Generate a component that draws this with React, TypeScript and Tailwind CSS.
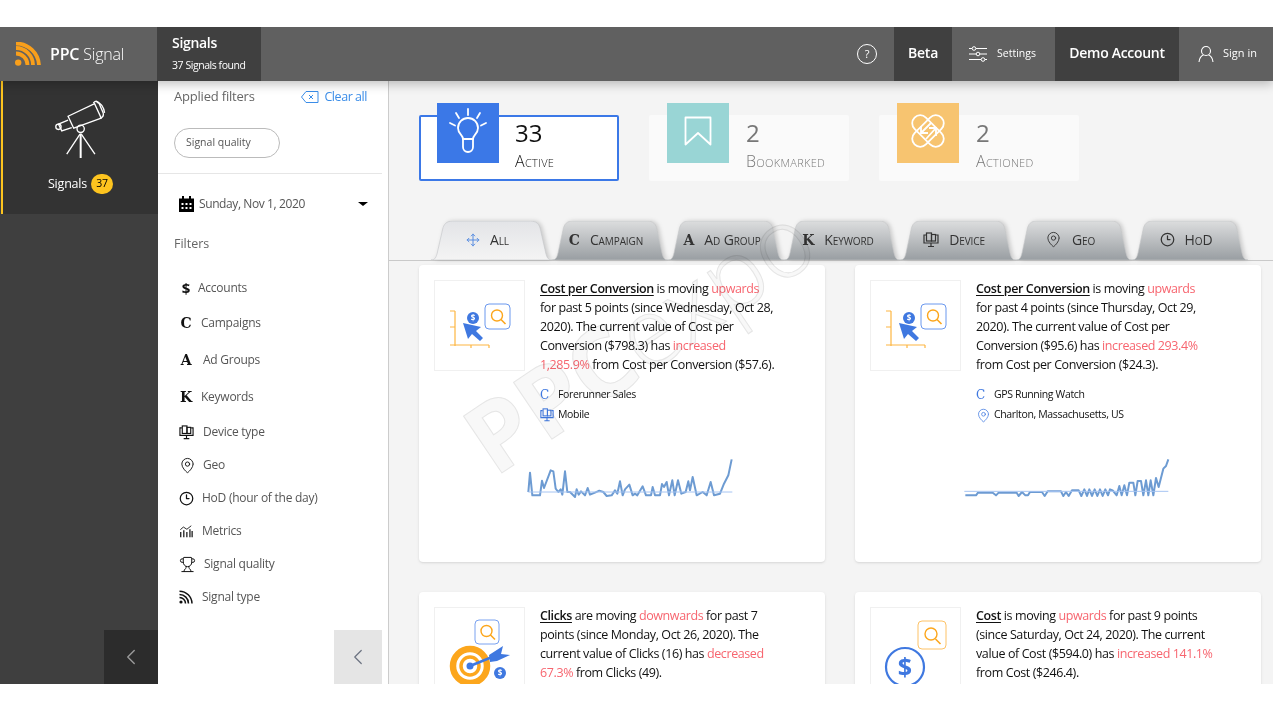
import React from 'react'
import { ChevronLeft, Move, MapPin, Clock3, Trophy } from 'lucide-react'

const font = 'font-["Open_Sans",sans-serif]'

function Serif({ c, className = '' }: { c: string; className?: string }) {
    return <span className={`font-["DejaVu_Serif",serif] font-bold leading-none ${className}`}>{c}</span>
}

function DeviceIcon({ className = '' }: { className?: string }) {
    return (
        <svg viewBox="0 0 16 16" className={className} fill="none" stroke="currentColor" strokeWidth="1.2">
            <path d="M3 3H1v8h14V3h-2" />
            <rect x="3.5" y="1" width="5" height="8" />
            <rect x="8.5" y="2.5" width="4" height="6.5" />
            <path d="M8 11v3M5 14.5h6" />
        </svg>
    )
}

function MetricsIcon({ className = '' }: { className?: string }) {
    return (
        <svg viewBox="0 0 16 16" className={className} fill="none" stroke="currentColor" strokeWidth="1.4">
            <path d="M2 15V9M5.5 15V7M9 15V9M12.5 15V6M15 15V8" />
            <path d="M1.5 6.5 5 3.5 9 6l5-4" strokeWidth="1" />
        </svg>
    )
}

function RssIcon() {
    return (
        <svg viewBox="0 0 14 14" className="w-[14px] h-[14px]" fill="none" stroke="#111" strokeWidth="1.5">
            <circle cx="2" cy="12" r="1.6" fill="#111" stroke="none" />
            <path d="M.5 7.5a6 6 0 0 1 6 6M.5 4.5a9 9 0 0 1 9 9M.5 1.2a12.5 12.5 0 0 1 12.5 12.3" />
        </svg>
    )
}

function CalendarIcon() {
    return (
        <svg viewBox="0 0 15 16" className="w-[15px] h-[16px] mr-[5px]">
            <path d="M0 2.5h3V0h2v2.5h5V0h2v2.5h3V16H0Z" fill="#000" />
            <path d="M2.5 7h2v2h-2zM6.5 7h2v2h-2zM10.5 7h2v2h-2zM2.5 11h2v2h-2zM6.5 11h2v2h-2zM10.5 11h2v2h-2z" fill="#fff" />
        </svg>
    )
}

function Logo() {
    return (
        <svg viewBox="0 0 26 24" className="w-[26px] h-[24px]" fill="none" stroke="#f99f1b" strokeWidth="3.8">
            <circle cx="3.2" cy="20.6" r="3.2" fill="#f99f1b" stroke="none" />
            <path d="M1 11.5a11.5 11.5 0 0 1 11.5 11.5" />
            <path d="M1 6a17 17 0 0 1 17 17" />
            <path d="M1 1.5a23 23 0 0 1 23 21.5" />
        </svg>
    )
}

function Telescope() {
    return (
        <svg viewBox="160 235 165 190" className="w-[55px] h-[63px]" fill="none" stroke="#fff" strokeWidth="4">
            <path d="M205 290 285 252 305 296 222 326Z" />
            <path d="M281 250c8-8 14-6 18 2l12 28c2 8-2 14-10 16" />
            <path d="M291 248c12 0 22 14 24 32" />
            <path d="M205 302 176 314l10 20 30-10" />
            <circle cx="176" cy="322" r="8" />
            <circle cx="243" cy="328" r="11" />
            <path d="M243 342v74" strokeWidth="6" />
            <path d="M241 344 201 404M245 344l41 60" />
        </svg>
    )
}

function BulbIcon() {
    return (
        <svg viewBox="0 0 62 60" className="w-[62px] h-[60px]" fill="none" stroke="#fff" strokeWidth="1.8" strokeLinecap="round">
            <path d="M26 36c0-4-5-5-5-11a10 10 0 0 1 20 0c0 6-5 7-5 11" />
            <path d="M26 36h10v8a5 5 0 0 1-10 0Z" />
            <path d="M31 6v6M19 10l3 5M43 10l-3 5M13 20l5 2.5M49 20l-5 2.5" />
        </svg>
    )
}

function BookmarkIcon() {
    return (
        <svg viewBox="0 0 62 60" className="w-[62px] h-[60px]" fill="none" stroke="#fff" strokeWidth="1.8" strokeLinejoin="round">
            <path d="M18.5 14.500h25v27L31 30 18.5 41.5Z" />
        </svg>
    )
}

function ActionedIcon() {
    return (
        <svg viewBox="0 0 62 60" className="w-[62px] h-[60px]" fill="none" stroke="#fff" strokeWidth="1.8">
            <rect x="12" y="20" width="38" height="16" rx="8" transform="rotate(45 31 28)" />
            <rect x="12" y="20" width="38" height="16" rx="8" transform="rotate(-45 31 28)" />
            <path d="M24 23v7h7M24.5 29.5 34 20" />
            <path d="M39 33v-8h-7M38.5 25.5 29 36" />
        </svg>
    )
}

function Magnifier({ x, y, w, h, stroke }: { x: number; y: number; w: number; h: number; stroke: string }) {
    const cx = x + w / 2
    const cy = y + h / 2
    return (
        <g>
            <rect x={x} y={y} width={w} height={h} rx="4" fill="#fff" stroke={stroke} strokeWidth="1" />
            <circle cx={cx - 0.5} cy={cy - 1} r="5.5" fill="none" stroke="#fca61c" strokeWidth="1.4" />
            <path d={`M${cx + 3.5} ${cy + 3} l4.5 4.5`} stroke="#fca61c" strokeWidth="1.6" />
        </g>
    )
}

function Badge({ x, y }: { x: number; y: number }) {
    return (
        <g>
            <circle cx={x} cy={y} r="6" fill="#3f78e0" />
            <text x={x} y={y + 3} textAnchor="middle" fontSize="8" fontWeight="700" fill="#fff" fontFamily="Open Sans">$</text>
        </g>
    )
}

function ChartThumb() {
    return (
        <svg viewBox="0 0 89 89" className="w-full h-full" fill="none">
            <path d="M20 30v35M15 30h5M15 46h5M15 64h39M36 64v3M54 64v3" stroke="#fdb642" strokeWidth="1.2" />
            <path d="M28 42 46 46 41 50 48 57 45 60 37 53 33 58Z" fill="#3f78e0" />
            <Badge x={38} y={37} />
            <Magnifier x={50} y={23} w={25} h={25} stroke="#6b98ee" />
        </svg>
    )
}

function TargetThumb() {
    return (
        <svg viewBox="0 0 89 89" className="w-full h-full" fill="none">
            <Magnifier x={40} y={12} w={24} h={24} stroke="#7aa2f0" />
            <circle cx="35" cy="58" r="17" stroke="#fca61c" strokeWidth="6.5" />
            <circle cx="35" cy="58" r="9" stroke="#fca61c" strokeWidth="3.5" />
            <circle cx="35" cy="58" r="3.5" fill="#3f78e0" />
            <path d="M35 58 62 47" stroke="#3f78e0" strokeWidth="2.5" />
            <path d="M54 47l14-9-2 8 9 1-13 6-7 1Z" fill="#3f78e0" />
            <Badge x={65} y={65} />
        </svg>
    )
}

function DollarThumb() {
    return (
        <svg viewBox="0 0 89 89" className="w-full h-full" fill="none">
            <rect x="47" y="13" width="28" height="28" rx="4" fill="#fff" stroke="#fdc266" strokeWidth="1" />
            <circle cx="60" cy="26" r="6" stroke="#fca61c" strokeWidth="1.4" />
            <path d="M64.5 31l5 5" stroke="#fca61c" strokeWidth="1.6" />
            <circle cx="34" cy="59" r="19" stroke="#3f78e0" strokeWidth="2.2" />
            <text x="34" y="68" textAnchor="middle" fontSize="25" fontWeight="700" fill="#3f78e0" fontFamily="Open Sans">$</text>
        </svg>
    )
}

const spark1 = '25,150 30,92 37,160 60,160 66,116 72,138 92,85 100,88 107,140 115,150 122,142 127,158 135,88 142,150 150,150 165,165 170,142 176,158 183,148 195,160 203,138 210,158 225,152 238,146 250,150 260,162 275,160 285,145 292,155 300,118 308,160 315,142 328,128 338,160 345,155 352,160 368,133 378,160 393,160 398,135 405,160 420,160 426,126 432,135 440,120 447,160 457,115 464,160 474,115 484,155 497,150 505,118 510,145 518,105 530,160 548,150 560,160 572,120 582,160 600,155 612,125 625,100 635,52'
const spark2 = '28,160 60,160 66,152 110,152 120,160 128,152 182,152 188,162 198,150 208,160 216,160 222,150 258,150 266,162 275,148 315,148 322,162 330,150 338,162 348,145 368,145 376,162 385,142 393,162 400,142 408,162 416,142 424,162 432,142 440,162 448,142 456,160 462,142 470,145 482,160 490,132 497,160 505,130 513,160 520,122 532,122 538,160 545,117 555,117 562,160 570,115 577,160 584,115 592,160 600,108 608,135 622,80 630,72 637,52'

function Spark({ points, base }: { points: string; base: number }) {
    return (
        <svg viewBox="0 0 660 210" className="w-[220px] h-[70px] ml-[86px] mt-[17px]" fill="none">
            <polyline points={points} stroke="#6d9bd2" strokeWidth="6" strokeLinejoin="round" />
            <path d={`M25 ${base}H637`} stroke="#a6c4f2" strokeWidth="3" />
        </svg>
    )
}

const R = ({ children }: { children: React.ReactNode }) => <span className="text-[#f7656f]">{children}</span>
const T = ({ children }: { children: React.ReactNode }) => <span className="font-semibold underline underline-offset-2">{children}</span>

function Card({ thumb, lines, meta, spark }: { thumb: React.ReactNode; lines: React.ReactNode; meta?: React.ReactNode; spark?: React.ReactNode }) {
    return (
        <div className="bg-white h-[297px] p-[15px] rounded-sm shadow-sm">
            <div className="flex gap-[15px]">
                <div className="w-[91px] h-[91px] border border-[#f0f0f0] shrink-0">{thumb}</div>
                <div className="text-[12.5px] leading-[19px] text-[#111] whitespace-nowrap -mt-[1px] tracking-[-0.4px]">{lines}</div>
            </div>
            {meta}
            {spark}
        </div>
    )
}

function MetaRow({ icon, text }: { icon: React.ReactNode; text: string }) {
    return (
        <div className="flex items-center h-[20px] pl-[106px] text-[10.5px] text-[#111] tracking-[-0.35px]">
            <span className="w-[18px] flex text-[#3f78e0]">{icon}</span>
            {text}
        </div>
    )
}

const filters = [
    { icon: <span className="font-bold text-[15px] leading-none">$</span>, label: 'Accounts', h: 'h-[34px]', gap: 'gap-[5px]' },
    { icon: <Serif c="C" className="text-[14px]" />, label: 'Campaigns', h: 'h-[36px]', gap: 'gap-[8px]' },
    { icon: <Serif c="A" className="text-[14px]" />, label: 'Ad Groups', h: 'h-[38px]', gap: 'gap-[10px]' },
    { icon: <Serif c="K" className="text-[14px]" />, label: 'Keywords', h: 'h-[36px]', gap: 'gap-[8px]' },
    { icon: <DeviceIcon className="w-[15px] h-[15px]" />, label: 'Device type', h: 'h-[34px]', gap: 'gap-[9px]' },
    { icon: <MapPin className="w-[17px] h-[17px]" strokeWidth={1.3} />, label: 'Geo', h: 'h-[32px]', gap: 'gap-[7px]' },
    { icon: <Clock3 className="w-[15px] h-[15px]" strokeWidth={2} />, label: 'HoD (hour of the day)', h: 'h-[34px]', gap: 'gap-[8px]' },
    { icon: <MetricsIcon className="w-[14px] h-[14px]" />, label: 'Metrics', h: 'h-[32px]', gap: 'gap-[9px]' },
    { icon: <Trophy className="w-[17px] h-[17px]" strokeWidth={1.4} />, label: 'Signal quality', h: 'h-[34px]', gap: 'gap-[8px]' },
    { icon: <RssIcon />, label: 'Signal type', h: 'h-[32px]', gap: 'gap-[9px]' },
]

const tabs = [
    { label: 'Campaign', icon: <Serif c="C" className="text-[14px]" /> },
    { label: 'Ad Group', icon: <Serif c="A" className="text-[14px]" /> },
    { label: 'Keyword', icon: <Serif c="K" className="text-[14px]" /> },
    { label: 'Device', icon: <DeviceIcon className="w-[16px] h-[16px]" /> },
    { label: 'Geo', icon: <MapPin className="w-[17px] h-[17px]" strokeWidth={1.3} /> },
    { label: 'HoD', icon: <Clock3 className="w-[15px] h-[15px]" strokeWidth={2} /> },
]

function Tab({ id, label, icon, active }: { id: string; label: string; icon: React.ReactNode; active?: boolean }) {
    return (
        <div className={`relative h-[39px] flex items-center justify-center gap-[10px] pb-[2px] pr-[8px] text-[14px] text-[#333] [font-variant-caps:small-caps] tracking-[-0.1px] ${active ? 'w-[121px] z-10' : 'w-[116px]'}`}>
            <svg viewBox="0 0 116 39" preserveAspectRatio="none" className="absolute inset-0 w-full h-full drop-shadow-[2px_0_2px_rgba(0,0,0,0.18)]">
                <defs>
                    <linearGradient id={id} x1="0" y1="0" x2="0" y2="1">
                        <stop offset="0" stopColor={active ? '#e3e4e7' : '#dcddde'} />
                        <stop offset="1" stopColor={active ? '#f4f4f4' : '#999ea2'} />
                    </linearGradient>
                </defs>
                <path d="M0 39C4 39 5 36 6 32L11 9C12 3 15 0 21 0H95C101 0 104 3 105 9L110 32C111 36 112 39 116 39Z" fill={`url(#${id})`} stroke="#c4c6c8" strokeWidth="0.6" />
            </svg>
            <span className="relative flex">{icon}</span>
            <span className="relative">{label}</span>
        </div>
    )
}

function Stat({ bg, icon, num, label, active }: { bg: string; icon: React.ReactNode; num: string; label: string; active?: boolean }) {
    return (
        <div className={`w-[200px] h-[66px] rounded-[2px] flex ${active ? 'bg-white border-2 border-[#3b78e7] pl-[16px] gap-[16px] text-[#111]' : 'bg-[#fafafa] pl-[18px] gap-[17px] text-[#777]'}`}>
            <div className={`w-[62px] h-[60px] shrink-0 ${active ? '-mt-[14px]' : '-mt-[12px]'} ${bg}`}>{icon}</div>
            <div className={active ? '-mt-[1px]' : 'pt-[1px]'}>
                <div className="text-[24px] leading-[34px]">{num}</div>
                <div className="text-[16px] leading-[22px] font-light [font-variant-caps:small-caps] tracking-[0.3px]">{label}</div>
            </div>
        </div>
    )
}

export default function App() {
    return (
        <div className={`h-[711px] bg-white pt-[27px] pb-[27px] ${font}`}>
            <div className="h-full flex flex-col overflow-hidden relative">
                <header className="h-[54px] shrink-0 bg-[#606060] flex items-stretch text-white relative z-20 shadow-[0_3px_10px_rgba(0,0,0,0.25)]">
                    <div className="w-[157px] flex items-center pl-[15px] gap-[9px]">
                        <Logo />
                        <div className="text-[16px] tracking-[-0.2px]"><span className="font-semibold">PPC</span> <span className="font-light">Signal</span></div>
                    </div>
                    <div className="w-[104px] bg-[#404040] pl-[15px] pt-[6px]">
                        <div className="text-[14px] font-semibold leading-[20px] tracking-[-0.3px]">Signals</div>
                        <div className="text-[10.5px] leading-[14px] mt-[5px] tracking-[-0.45px]">37 Signals found</div>
                    </div>
                    <div className="flex-1" />
                    <div className="w-[54px] flex items-center justify-center">
                        <div className="w-[20px] h-[20px] rounded-full border border-white flex items-center justify-center text-[11px]">?</div>
                    </div>
                    <div className="w-[58px] bg-[#404040] flex items-center justify-center pb-[3px] text-[14px] font-semibold tracking-[-0.2px]">Beta</div>
                    <div className="w-[103px] flex items-center pl-[17px] gap-[10px] text-[10.5px]">
                        <svg viewBox="0 0 18 16" className="w-[18px] h-[16px]" fill="none" stroke="#fff" strokeWidth="1">
                            <path d="M0 2.5h3M7 2.5h11M0 8h7M11 8h7M0 13.5h12M16 13.5h2" />
                            <circle cx="5" cy="2.5" r="1.8" /><circle cx="9" cy="8" r="1.8" /><circle cx="14" cy="13.5" r="1.8" />
                        </svg>
                        Settings
                    </div>
                    <div className="w-[124px] bg-[#404040] flex items-center justify-center pb-[3px] text-[14px] font-semibold tracking-[-0.3px]">Demo Account</div>
                    <div className="w-[94px] flex items-center pl-[19px] gap-[9px] pb-[1px] text-[11px]">
                        <svg viewBox="0 0 16 18" className="w-[16px] h-[18px]" fill="none" stroke="#fff" strokeWidth="1.1">
                            <circle cx="8" cy="6" r="4.5" />
                            <path d="M1 17c.5-4 3-6.5 4.5-7M15 17c-.5-4-3-6.5-4.500-7" />
                        </svg>
                        Sign in
                    </div>
                </header>

                <div className="flex-1 flex min-h-0">
                    <aside className="w-[158px] shrink-0 bg-[#3f3f3f] flex flex-col justify-between">
                        <div className="h-[133px] bg-[#333] border-l-2 border-[#fdc41f] ml-[1px] flex flex-col items-center pt-[17px]">
                            <Telescope />
                            <div className="flex items-center gap-[4px] mt-[13px] text-white text-[12.5px] tracking-[-0.2px]">
                                Signals
                                <span className="w-[22px] h-[20px] rounded-full bg-[#fdc41f] text-black text-[10.5px] flex items-center justify-center">37</span>
                            </div>
                        </div>
                        <div className="flex justify-end">
                            <div className="w-[54px] h-[54px] bg-[#2c2c2c] flex items-center justify-center text-[#9a9a9a]">
                                <ChevronLeft className="w-[26px] h-[26px]" strokeWidth={1.3} />
                            </div>
                        </div>
                    </aside>

                    <aside className="w-[231px] shrink-0 bg-white border-r border-[#ccc] flex flex-col pr-[6px] text-[#555]">
                        <div className="pl-[16px] pr-[15px] pt-[2px] flex items-center justify-between h-[30px]">
                            <span className="text-[13px] font-medium text-[#666] tracking-[-0.2px]">Applied filters</span>
                            <span className="flex items-center gap-[5px] text-[#3b8de8] text-[12.5px] tracking-[-0.45px]">
                                <svg viewBox="0 0 18 12" className="w-[18px] h-[12px]" fill="none" stroke="currentColor" strokeWidth="1">
                                    <path d="M5 .5h12v11H5L.5 6ZM8 4l4 4M12 4 8 8" />
                                </svg>
                                Clear all
                            </span>
                        </div>
                        <div className="pl-[16px] pt-[17px] pb-[15px] border-b border-[#e6e6e6]">
                            <span className="w-[106px] h-[30px] rounded-full border border-[#bbb] flex items-center pl-[11px] text-[10.5px]">Signal quality</span>
                        </div>
                        <div className="flex items-center pl-[21px] pr-[14px] h-[60px] text-[12px] tracking-[-0.4px]">
                            <CalendarIcon />
                            Sunday, Nov 1, 2020
                            <span className="ml-auto w-0 h-0 border-x-[5px] border-x-transparent border-t-[4px] border-t-black" />
                        </div>
                        <div className="pl-[16px] text-[12.5px] font-medium text-[#666] leading-[20px]">Filters</div>
                        <div className="mt-[17px] pl-[21px] text-[12px] tracking-[-0.25px]">
                            {filters.map((f) => (
                                <div key={f.label} className={`flex items-center ${f.h} ${f.gap}`}>
                                    <span className="min-w-[14px] flex justify-center text-[#111]">{f.icon}</span>
                                    {f.label}
                                </div>
                            ))}
                        </div>
                        <div className="mt-auto flex justify-end">
                            <div className="w-[48px] h-[54px] bg-[#e5e5e5] flex items-center justify-center text-[#6b7280]">
                                <ChevronLeft className="w-[26px] h-[26px]" strokeWidth={1.1} />
                            </div>
                        </div>
                    </aside>

                    <main className="flex-1 min-w-0 bg-[#f4f4f4] relative overflow-hidden">
                        <div className="flex gap-[30px] pl-[30px] pt-[34px]">
                            <Stat active bg="bg-[#3b78e7]" icon={<BulbIcon />} num="33" label="Active" />
                            <Stat bg="bg-[#99d5d5]" icon={<BookmarkIcon />} num="2" label="Bookmarked" />
                            <Stat bg="bg-[#f7c470]" icon={<ActionedIcon />} num="2" label="Actioned" />
                        </div>
                        <div className="mt-[40px] pl-[42px] flex border-b border-[#c9c9c9] h-[40px]">
                            <Tab active id="tab-all" label="All" icon={<Move className="w-[14px] h-[14px] text-[#4f86e0]" strokeWidth={1.6} />} />
                            {tabs.map((t, i) => <Tab key={t.label} id={`tab-${i}`} label={t.label} icon={t.icon} />)}
                        </div>
                        <div className="grid grid-cols-[406px_406px] gap-x-[30px] gap-y-[30px] pl-[30px] mt-[4px]">
                            <Card
                                thumb={<ChartThumb />}
                                lines={<><T>Cost per Conversion</T> is moving <R>upwards</R><br />for past 5 points (since Wednesday, Oct 28,<br />2020). The current value of Cost per<br />Conversion ($798.3) has <R>increased</R><br /><R>1,285.9%</R> from Cost per Conversion ($57.6).</>}
                                meta={<div className="mt-[11px]"><MetaRow icon={<Serif c="C" className="text-[12px] font-normal" />} text="Forerunner Sales" /><MetaRow icon={<DeviceIcon className="w-[14px] h-[14px]" />} text="Mobile" /></div>}
                                spark={<Spark points={spark1} base={150} />}
                            />
                            <Card
                                thumb={<ChartThumb />}
                                lines={<><T>Cost per Conversion</T> is moving <R>upwards</R><br />for past 4 points (since Thursday, Oct 29,<br />2020). The current value of Cost per<br />Conversion ($95.6) has <R>increased 293.4%</R><br />from Cost per Conversion ($24.3).</>}
                                meta={<div className="mt-[11px]"><MetaRow icon={<Serif c="C" className="text-[12px] font-normal" />} text="GPS Running Watch" /><MetaRow icon={<MapPin className="w-[15px] h-[15px]" strokeWidth={1.2} />} text="Charlton, Massachusetts, US" /></div>}
                                spark={<Spark points={spark2} base={148} />}
                            />
                            <Card
                                thumb={<TargetThumb />}
                                lines={<><T>Clicks</T> are moving <R>downwards</R> for past 7<br />points (since Monday, Oct 26, 2020). The<br />current value of Clicks (16) has <R>decreased</R><br /><R>67.3%</R> from Clicks (49).</>}
                            />
                            <Card
                                thumb={<DollarThumb />}
                                lines={<><T>Cost</T> is moving <R>upwards</R> for past 9 points<br />(since Saturday, Oct 24, 2020). The current<br />value of Cost ($594.0) has <R>increased 141.1%</R><br />from Cost ($246.4).</>}
                            />
                        </div>
                        <div className="absolute left-[85px] top-[318px] -rotate-[34deg] origin-left pointer-events-none text-[96px] leading-none text-[#f8f8f8] mix-blend-multiply [-webkit-text-stroke:1px_#e6e6e6] whitespace-nowrap">
                            <span className="font-bold">PPC</span><span className="font-light">expo</span>
                        </div>
                    </main>
                </div>
            </div>
        </div>
    )
}
